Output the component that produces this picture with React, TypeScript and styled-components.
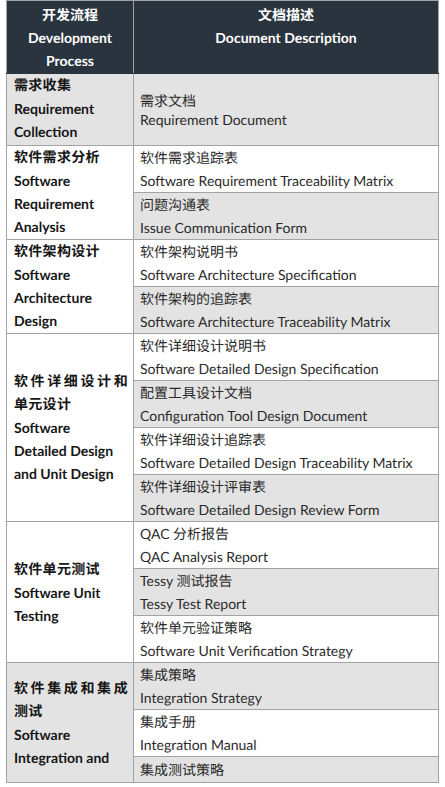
import React from "react";
import styled, { createGlobalStyle } from "styled-components";

const Global = createGlobalStyle`
  html, body { margin: 0; padding: 0; background: #ffffff; }
  body {
    font-family: Lato, "Noto Sans CJK SC", sans-serif;
    -webkit-font-smoothing: antialiased;
    text-rendering: geometricPrecision;
  }
`;

const Frame = styled.div`
  margin-left: 6px;
  width: 433px;
`;

const Table = styled.table`
  width: 433px;
  border-collapse: collapse;
  table-layout: fixed;
  font-size: 14px;
  line-height: 23px;
  color: #1f1f1f;
`;

const HeadCell = styled.th`
  background: #29343e;
  color: #ffffff;
  font-weight: 700;
  text-align: center;
  vertical-align: top;
  padding: 2px 4px 1px;
  border: 1px solid #a3a3a3;
  border-bottom-color: #29343e;
`;

const ProcessCell = styled.td<{ $shade?: boolean; $middle?: boolean; $padBottom?: number }>`
  background: ${(p) => (p.$shade ? "#e3e3e3" : "#ffffff")};
  vertical-align: ${(p) => (p.$middle ? "middle" : "top")};
  padding: 0 5px ${(p) => p.$padBottom ?? 0}px 7px;
  border: 1px solid #a3a3a3;
  font-weight: 700;
  color: #161616;
`;

const Zh = styled.div`
  font-family: "Noto Sans CJK SC", sans-serif;
  text-align: justify;
  letter-spacing: 0.3px;
`;

const En = styled.div`
  text-align: left;
`;

const DocCell = styled.td<{ $shade?: boolean; $compact?: boolean; $padY?: number }>`
  background: ${(p) => (p.$shade ? "#e3e3e3" : "#ffffff")};
  vertical-align: middle;
  padding: ${(p) => p.$padY ?? 0}px 6px;
  border: 1px solid #a3a3a3;
  color: #2a2a2a;
  line-height: ${(p) => (p.$compact ? "19px" : "23px")};
  white-space: nowrap;
`;

const ZhLine = styled.span`
  font-family: Lato, "Noto Sans CJK SC", sans-serif;
`;

type Doc = { zh: string; en?: string; shade: boolean };
type Group = {
  zh: string;
  en: string[];
  shade: boolean;
  middle: boolean;
  docs: Doc[];
};

const groups: Group[] = [
  {
    zh: "软件需求分析",
    en: ["Software", "Requirement", "Analysis"],
    shade: false,
    middle: false,
    docs: [
      { zh: "软件需求追踪表", en: "Software Requirement Traceability Matrix", shade: false },
      { zh: "问题沟通表", en: "Issue Communication Form", shade: true },
    ],
  },
  {
    zh: "软件架构设计",
    en: ["Software", "Architecture", "Design"],
    shade: false,
    middle: false,
    docs: [
      { zh: "软件架构说明书", en: "Software Architecture Specification", shade: false },
      { zh: "软件架构的追踪表", en: "Software Architecture Traceability Matrix", shade: true },
    ],
  },
  {
    zh: "软件详细设计和单元设计",
    en: ["Software", "Detailed Design", "and Unit Design"],
    shade: false,
    middle: true,
    docs: [
      { zh: "软件详细设计说明书", en: "Software Detailed Design Specification", shade: false },
      { zh: "配置工具设计文档", en: "Configuration Tool Design Document", shade: true },
      { zh: "软件详细设计追踪表", en: "Software Detailed Design Traceability Matrix", shade: false },
      { zh: "软件详细设计评审表", en: "Software Detailed Design Review Form", shade: true },
    ],
  },
  {
    zh: "软件单元测试",
    en: ["Software Unit", "Testing"],
    shade: false,
    middle: true,
    docs: [
      { zh: "QAC 分析报告", en: "QAC Analysis Report", shade: false },
      { zh: "Tessy 测试报告", en: "Tessy Test Report", shade: true },
      { zh: "软件单元验证策略", en: "Software Unit Verification Strategy", shade: false },
    ],
  },
  {
    zh: "软件集成和集成测试",
    en: ["Software", "Integration and"],
    shade: true,
    middle: true,
    docs: [
      { zh: "集成策略", en: "Integration Strategy", shade: true },
      { zh: "集成手册", en: "Integration Manual", shade: false },
      { zh: "集成测试策略", shade: true },
    ],
  },
];

export default function App() {
  return (
    <>
      <Global />
      <Frame>
        <Table>
          <colgroup>
            <col style={{ width: 127 }} />
            <col />
          </colgroup>
          <thead>
            <tr>
              <HeadCell>
                开发流程
                <br />
                Development
                <br />
                Process
              </HeadCell>
              <HeadCell>
                文档描述
                <br />
                Document Description
              </HeadCell>
            </tr>
          </thead>
          <tbody>
            <tr>
              <ProcessCell $shade $padBottom={2}>
                <Zh>需求收集</Zh>
                <En>Requirement</En>
                <En>Collection</En>
              </ProcessCell>
              <DocCell $shade $compact>
                <ZhLine>需求文档</ZhLine>
                <br />
                Requirement Document
              </DocCell>
            </tr>
            {groups.map((g) =>
              g.docs.map((d, i) => (
                <tr key={g.zh + i}>
                  {i === 0 && (
                    <ProcessCell rowSpan={g.docs.length} $shade={g.shade} $middle={g.middle}>
                      <Zh>{g.zh}</Zh>
                      {g.en.map((line) => (
                        <En key={line}>{line}</En>
                      ))}
                    </ProcessCell>
                  )}
                  <DocCell $shade={d.shade} $padY={d.en ? 0 : 1}>
                    <ZhLine>{d.zh}</ZhLine>
                    {d.en && (
                      <>
                        <br />
                        {d.en}
                      </>
                    )}
                  </DocCell>
                </tr>
              ))
            )}
          </tbody>
        </Table>
      </Frame>
    </>
  );
}
